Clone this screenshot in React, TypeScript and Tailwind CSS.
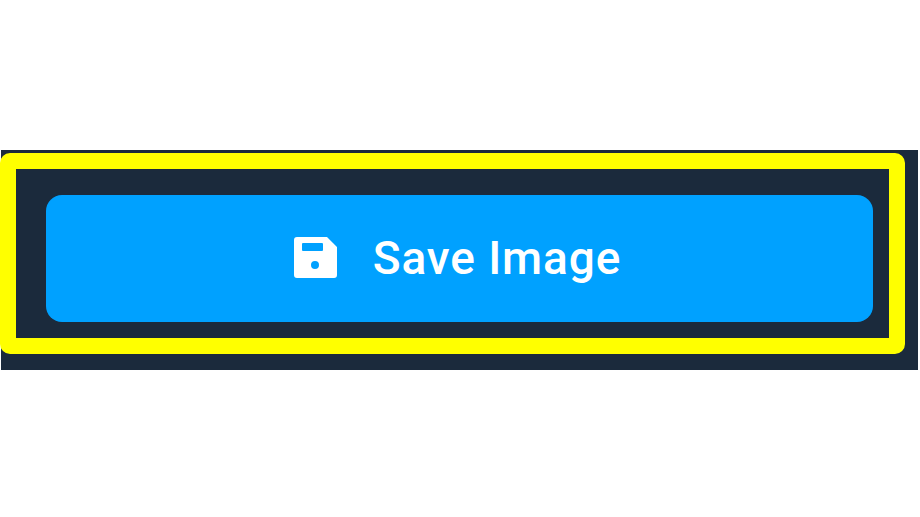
export default function App() {
  return (
    <div className="h-[517px] w-[920px] overflow-hidden bg-white pt-[150px] pl-px">
      <div className="relative h-[220px] w-[917px] bg-[#1b2a3c] pt-[45px] pr-[45px] pl-[45px]">
        <button className="flex h-[127px] w-[827px] items-center justify-center gap-[36px] rounded-[16px] bg-[#00a1ff] pr-[4px] text-white">
          <svg className="mb-[2px]" width="43" height="42" viewBox="0 0 43 42" aria-hidden="true">
            <path
              fillRule="evenodd"
              fill="#ffffff"
              d="M3 0H33L43 10V38a3 3 0 0 1-3 3H3a3 3 0 0 1-3-3V3a3 3 0 0 1 3-3zM9 6a1 1 0 0 0-1 1V13a1 1 0 0 0 1 1H28a1 1 0 0 0 1-1V7a1 1 0 0 0-1-1zM21 24a4 4 0 1 0 0 8a4 4 0 1 0 0-8z"
            />
          </svg>
          <span className="mb-[2px] font-['Roboto',sans-serif] text-[46px] leading-none font-medium tracking-[0.9px]">Save Image</span>
        </button>
        <div className="absolute top-[3px] left-[-1px] h-[201px] w-[905px] rounded-[10px] border-[16px] border-[#ffff00]" />
      </div>
    </div>
  );
}
